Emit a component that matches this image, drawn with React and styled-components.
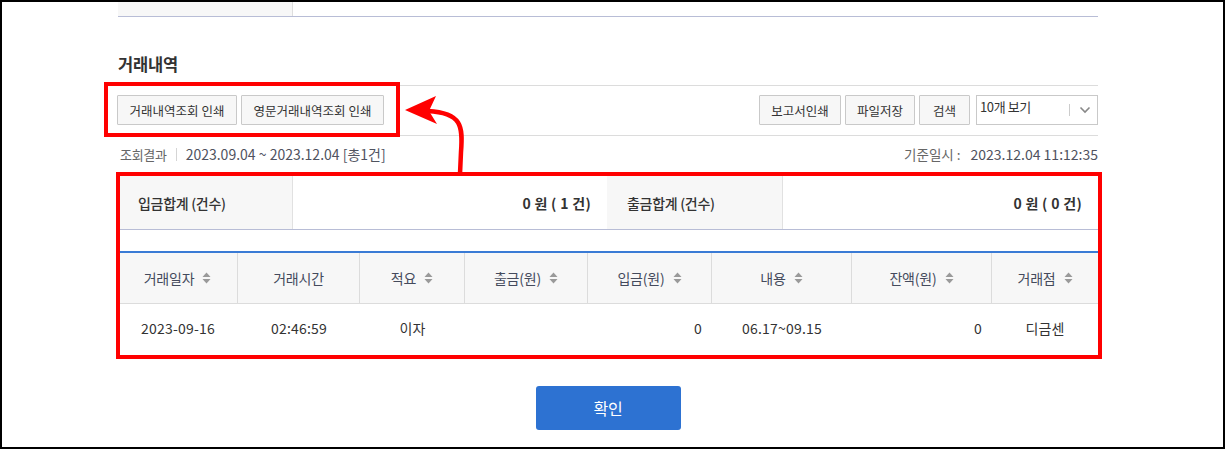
import styled, { createGlobalStyle } from "styled-components";

const GlobalStyle = createGlobalStyle`
  html, body {
    margin: 0;
    padding: 0;
    background: #fff;
  }
  body {
    font-family: "Noto Sans CJK KR", "Noto Sans", sans-serif;
    color: #333;
  }
  * {
    box-sizing: border-box;
  }
`;

const SortIcon = () => (
  <svg width="9" height="12" viewBox="0 0 9 12">
    <path d="M4.5 0.5 L8.5 5 L0.5 5 Z" fill="#9a9a9a" />
    <path d="M4.5 11.5 L8.5 7 L0.5 7 Z" fill="#9a9a9a" />
  </svg>
);

const Chevron = () => (
  <svg width="12" height="8" viewBox="0 0 12 8">
    <path
      d="M1.5 1.5 L6 6 L10.5 1.5"
      fill="none"
      stroke="#888"
      strokeWidth="1.6"
    />
  </svg>
);

const summary = [
  { label: "입금합계 (건수)", value: "0 원 ( 1 건)", lw: 175, vw: 314 },
  { label: "출금합계 (건수)", value: "0 원 ( 0 건)", lw: 176, vw: 315 },
];

const columns = [
  { title: "거래일자", width: 120, sort: true, align: "center" },
  { title: "거래시간", width: 122, sort: false, align: "center" },
  { title: "적요", width: 105, sort: true, align: "center" },
  { title: "출금(원)", width: 123, sort: true, align: "right" },
  { title: "입금(원)", width: 124, sort: true, align: "right" },
  { title: "내용", width: 140, sort: true, align: "center" },
  { title: "잔액(원)", width: 140, sort: true, align: "right" },
  { title: "거래점", width: 106, sort: true, align: "center" },
];

const rows = [
  ["2023-09-16", "02:46:59", "이자", "", "0", "06.17~09.15", "0", "디금센"],
];

const App = () => {
  return (
    <>
      <GlobalStyle />
      <Frame>
        <Content>
          <TopFragment>
            <FragLabel />
            <FragValue />
          </TopFragment>

          <Heading>거래내역</Heading>

          <Toolbar>
            <ButtonGroup>
              <GrayButton $w={120}>거래내역조회 인쇄</GrayButton>
              <GrayButton $w={143}>영문거래내역조회 인쇄</GrayButton>
            </ButtonGroup>
            <ButtonGroup>
              <GrayButton $w={82}>보고서인쇄</GrayButton>
              <GrayButton $w={70}>파일저장</GrayButton>
              <GrayButton $w={51}>검색</GrayButton>
              <Select>
                <span>10개 보기</span>
                <SelectArrow>
                  <Chevron />
                </SelectArrow>
              </Select>
            </ButtonGroup>
          </Toolbar>

          <ResultLine>
            <ResultLeft>
              <span>조회결과</span>
              <Divider />
              <Num>2023.09.04 ~ 2023.12.04 [총1건]</Num>
            </ResultLeft>
            <ResultRight>
              <span>기준일시 :</span>
              <Num>2023.12.04 11:12:35</Num>
            </ResultRight>
          </ResultLine>

          <SummaryTable>
            {summary.map((s) => (
              <SummaryPair key={s.label}>
                <SummaryLabel $w={s.lw}>{s.label}</SummaryLabel>
                <SummaryValue $w={s.vw}>{s.value}</SummaryValue>
              </SummaryPair>
            ))}
          </SummaryTable>

          <ListTable>
            <HeadRow>
              {columns.map((c, i) => (
                <HeadCell key={c.title} $w={c.width} $last={i === columns.length - 1}>
                  <span>{c.title}</span>
                  {c.sort && <SortIcon />}
                </HeadCell>
              ))}
            </HeadRow>
            {rows.map((r, ri) => (
              <BodyRow key={ri}>
                {r.map((v, i) => (
                  <BodyCell key={i} $w={columns[i].width} $align={columns[i].align}>
                    {v}
                  </BodyCell>
                ))}
              </BodyRow>
            ))}
          </ListTable>

          <Footer>
            <ConfirmButton>확인</ConfirmButton>
          </Footer>
        </Content>

        <RedBox $x={104} $y={82} $w={296} $h={55} />
        <RedBox $x={116} $y={172} $w={986} $h={187} />
        <ArrowLayer width="1225" height="449" viewBox="0 0 1225 449">
          <path
            d="M460 174 L461 152 C463 126, 462 113, 428 111"
            fill="none"
            stroke="#ff0000"
            strokeWidth="4.5"
          />
          <path d="M405 110 L436 96 L429 111 L437 124 Z" fill="#ff0000" />
        </ArrowLayer>
      </Frame>
    </>
  );
};

const Frame = styled.div`
  position: relative;
  width: 1225px;
  height: 449px;
  border: 2px solid #000;
  overflow: hidden;
  background: #fff;
`;

const Content = styled.div`
  width: 980px;
  margin-left: 116px;
  display: flex;
  flex-direction: column;
`;

const TopFragment = styled.div`
  display: flex;
  height: 15px;
  border-bottom: 1px solid #b8bdd6;
`;

const FragLabel = styled.div`
  width: 175px;
  background: #f7f7f7;
  border-right: 1px solid #dedede;
`;

const FragValue = styled.div`
  flex: 1;
`;

const Heading = styled.h2`
  margin: 37px 0 0;
  height: 31px;
  font-size: 16.5px;
  font-weight: 700;
  line-height: 20px;
  color: #333;
  letter-spacing: -0.2px;
`;

const Toolbar = styled.div`
  display: flex;
  justify-content: space-between;
  align-items: center;
  height: 51px;
  border-top: 1px solid #dcdcdc;
  border-bottom: 1px solid #dcdcdc;
  padding: 0 0 1px;
`;

const ButtonGroup = styled.div`
  display: flex;
  gap: 5px;
  align-items: center;
`;

const GrayButton = styled.button`
  height: 30px;
  width: ${(p) => p.$w}px;
  padding: 0;
  background: #f7f7f7;
  border: 1px solid #c9c9c9;
  border-radius: 1px;
  font-family: "Noto Sans CJK KR", sans-serif;
  font-size: 12.5px;
  color: #333;
  letter-spacing: 0;
  margin-left: -1px;
`;

const Select = styled.div`
  position: relative;
  width: 122px;
  height: 30px;
  margin-left: 1px;
  border: 1px solid #c9c9c9;
  background: #fff;
  font-size: 13px;
  color: #333;
  padding: 2px 0 0 3px;
  line-height: 18px;
  letter-spacing: -0.4px;
`;

const SelectArrow = styled.div`
  position: absolute;
  right: 0;
  top: 8px;
  width: 28px;
  height: 12px;
  border-left: 1px solid #ccc;
  display: flex;
  align-items: center;
  justify-content: center;
  padding-left: 2px;
`;

const ResultLine = styled.div`
  display: flex;
  justify-content: space-between;
  align-items: center;
  height: 34px;
  padding-top: 2px;
  font-size: 13px;
  color: #666;
  letter-spacing: -0.3px;
`;

const Num = styled.span`
  font-size: 14px;
  letter-spacing: 0;
  color: #50535f;
`;

const ResultLeft = styled.div`
  display: flex;
  align-items: center;
  gap: 9px;
  padding-left: 2px;
`;

const Divider = styled.i`
  display: block;
  width: 1px;
  height: 13px;
  background: #d5d5d5;
`;

const ResultRight = styled.div`
  display: flex;
  align-items: center;
  gap: 10px;
  span:first-child {
    font-size: 13.5px;
    letter-spacing: 0;
  }
`;

const SummaryTable = styled.div`
  display: flex;
  margin-top: 6px;
  height: 54px;
  border-bottom: 1px solid #b8bdd6;
`;

const SummaryPair = styled.div`
  display: flex;
`;

const SummaryLabel = styled.div`
  width: ${(p) => p.$w}px;
  background: #f7f7f7;
  border-right: 1px solid #e1e1e1;
  display: flex;
  align-items: center;
  padding-left: 20px;
  font-size: 14px;
  font-weight: 500;
  color: #333;
  letter-spacing: -0.3px;
`;

const SummaryValue = styled.div`
  width: ${(p) => p.$w}px;
  display: flex;
  align-items: center;
  justify-content: flex-end;
  padding-right: 16px;
  font-size: 14px;
  font-weight: 700;
  color: #333;
  letter-spacing: 0.3px;
  border-right: 1px solid #e1e1e1;
  &:last-child {
    border-right: none;
  }
`;

const ListTable = styled.div`
  margin-top: 21px;
  border-top: 2px solid #3a7bd5;
  display: flex;
  flex-direction: column;
`;

const HeadRow = styled.div`
  display: flex;
  height: 51px;
  background: #f7f7f7;
  border-bottom: 1px solid #dcdcdc;
`;

const HeadCell = styled.div`
  width: ${(p) => p.$w}px;
  display: flex;
  align-items: center;
  justify-content: center;
  gap: 8px;
  font-size: 14px;
  color: #444a5c;
  letter-spacing: -0.2px;
  border-right: ${(p) => (p.$last ? "none" : "1px solid #dcdcdc")};
`;

const BodyRow = styled.div`
  display: flex;
  height: 47px;
`;

const BodyCell = styled.div`
  width: ${(p) => p.$w}px;
  display: flex;
  align-items: center;
  justify-content: ${(p) =>
    p.$align === "right" ? "flex-end" : "center"};
  padding-right: ${(p) => (p.$align === "right" ? "10px" : "0")};
  font-size: 14px;
  color: #333;
  letter-spacing: 0.2px;
`;

const Footer = styled.div`
  display: flex;
  justify-content: center;
  padding-top: 35px;
`;

const ConfirmButton = styled.button`
  width: 145px;
  height: 44px;
  border: none;
  border-radius: 3px;
  background: #2d72d2;
  color: #fff;
  font-family: "Noto Sans CJK KR", sans-serif;
  font-size: 16px;
  letter-spacing: -0.3px;
`;

const RedBox = styled.div`
  position: absolute;
  left: ${(p) => p.$x - 2}px;
  top: ${(p) => p.$y - 2}px;
  width: ${(p) => p.$w}px;
  height: ${(p) => p.$h}px;
  border: 4px solid #ff0000;
  pointer-events: none;
`;

const ArrowLayer = styled.svg`
  position: absolute;
  left: -2px;
  top: -2px;
  pointer-events: none;
`;

export default App;
